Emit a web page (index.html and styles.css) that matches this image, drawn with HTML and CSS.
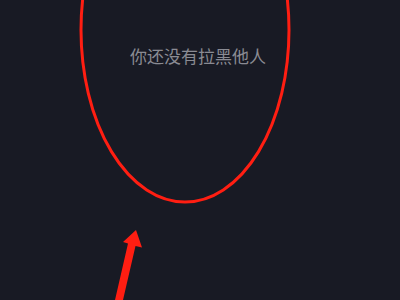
FILE: index.html
```html
<!DOCTYPE html>
<html lang="zh">
<head>
<meta charset="utf-8">
<link rel="stylesheet" href="styles.css">
</head>
<body>
<main class="screen">
  <p class="empty">你还没有拉黑他人</p>
  <svg class="mark" width="400" height="300" viewBox="0 0 400 300">
    <ellipse cx="185" cy="30" rx="104" ry="172" fill="none" stroke="#ff1e12" stroke-width="3"/>
    <polygon points="136,230 123,242 128,243.5 115,300 123,300 135.5,246 142,247.5" fill="#ff1e12"/>
  </svg>
</main>
</body>
</html>
```
FILE: styles.css
```css
html, body {
  margin: 0;
  padding: 0;
  background: #181a24;
}
.screen {
  position: relative;
  width: 400px;
  height: 300px;
  overflow: hidden;
  background: #181a24;
}
.empty {
  margin: 0;
  padding: 46px 0 0 130px;
  font-family: "Noto Sans CJK SC", "Noto Sans", sans-serif;
  font-size: 17px;
  line-height: 19px;
  color: #8a8b93;
}
.mark {
  position: absolute;
  left: 0;
  top: 0;
}
```
